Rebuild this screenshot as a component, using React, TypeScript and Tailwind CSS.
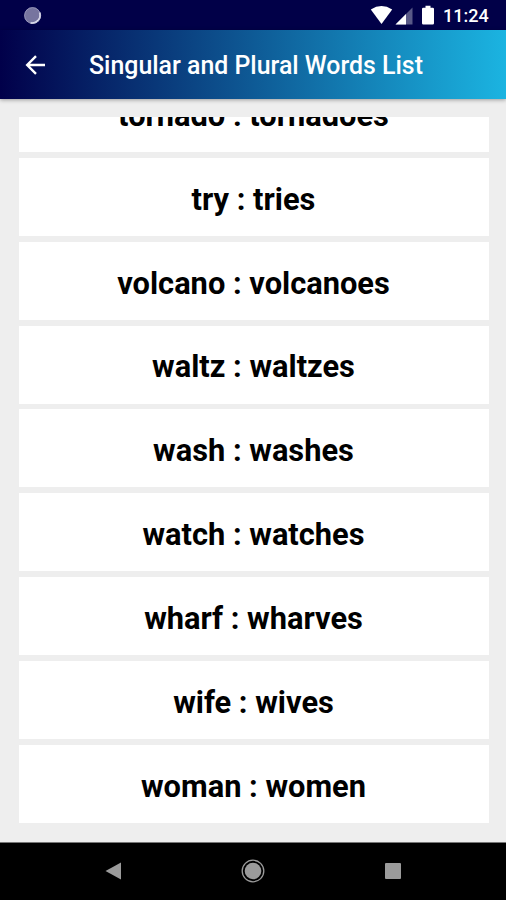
type WordPair = {
  singular: string;
  plural: string;
};

const words: WordPair[] = [
  { singular: "tornado", plural: "tornadoes" },
  { singular: "try", plural: "tries" },
  { singular: "volcano", plural: "volcanoes" },
  { singular: "waltz", plural: "waltzes" },
  { singular: "wash", plural: "washes" },
  { singular: "watch", plural: "watches" },
  { singular: "wharf", plural: "wharves" },
  { singular: "wife", plural: "wives" },
  { singular: "woman", plural: "women" },
];

function StatusBar() {
  return (
    <div className="flex h-[30px] shrink-0 items-center justify-between bg-[#010048] pl-[23px] pr-[18px]">
      <svg width="19" height="19" viewBox="0 0 19 19">
        <circle cx="9.5" cy="9.5" r="8.3" fill="#77759f" />
        <path d="M16.6 6.5A7.7 7.7 0 0 1 7.6 16.8" fill="none" stroke="#eeeef8" strokeWidth="1.8" />
        <circle cx="9.5" cy="9.5" r="7.9" fill="none" stroke="#a5a4c4" strokeWidth="0.7" />
      </svg>
      <div className="flex items-center">
        <svg width="66" height="20" viewBox="0 0 66 20" fill="#fff">
          <path d="M0.8 4.4Q11.5 -2.4 22.2 4.4L11.5 18.9Z" />
          <path d="M25.5 19.5L42.5 2.5V19.5Z" fillOpacity="0.35" />
          <path d="M25.5 19.5L36 9V19.5Z" />
          <path d="M55.5 0.8h5v2h2.2q1.3 0 1.3 1.3v14.1q0 1.3-1.3 1.3h-9.4q-1.3 0-1.3-1.3V4.1q0-1.3 1.3-1.3h2.2z" />
        </svg>
        <span className="ml-[7px] mt-[2px] w-[45px] whitespace-nowrap text-[18px] leading-5 font-medium text-white">
          11:24
        </span>
      </div>
    </div>
  );
}

function AppBar() {
  return (
    <header className="z-10 flex h-[69px] shrink-0 items-center bg-[linear-gradient(to_right,#01004a,#1bb4e1)] shadow-[0_1px_4px_rgba(0,0,0,0.35)]">
      <button type="button" aria-label="Back" className="ml-[25px]">
        <svg width="21" height="20" viewBox="0 0 21 20" fill="none" stroke="#fff" strokeWidth="2.4">
          <path d="M20 10H2.2M11 1.2L2.2 10L11 18.8" />
        </svg>
      </button>
      <h1 className="ml-[43px] mt-[3px] whitespace-nowrap text-[24.9px] leading-8 font-medium text-white">
        Singular and Plural Words List
      </h1>
    </header>
  );
}

function NavigationBar() {
  return (
    <nav className="flex h-[58px] shrink-0 items-center justify-between border-t border-[#777] bg-black px-[105px] pb-0.5">
      <svg width="16" height="20" viewBox="0 0 16 20" fill="#9b9b9b">
        <path d="M0.5 10L16 1.5V18.5Z" />
      </svg>
      <svg width="24" height="24" viewBox="0 0 24 24">
        <circle cx="12" cy="12" r="8.3" fill="#9b9b9b" />
        <circle cx="12" cy="12" r="10.8" fill="none" stroke="#9b9b9b" strokeWidth="1.3" />
      </svg>
      <div className="size-4 rounded-[1px] bg-[#9b9b9b]" />
    </nav>
  );
}

export default function App() {
  return (
    <div className="flex h-[900px] w-[506px] flex-col overflow-hidden bg-[#eee] font-['Roboto',sans-serif]">
      <StatusBar />
      <AppBar />
      <main className="min-h-0 flex-1 pt-[18px] pr-[17.5px] pb-[19px] pl-[18.5px]">
        {/* list is scrolled to its end, so the first row is cut off */}
        <ul className="flex h-full flex-col justify-end gap-[5.9px] overflow-hidden">
          {words.map((word) => (
            <li
              key={word.singular}
              className="flex h-[78px] shrink-0 items-center justify-center bg-white pt-1.5 text-[30.8px] font-bold text-black"
            >
              {word.singular} : {word.plural}
            </li>
          ))}
        </ul>
      </main>
      <NavigationBar />
    </div>
  );
}
